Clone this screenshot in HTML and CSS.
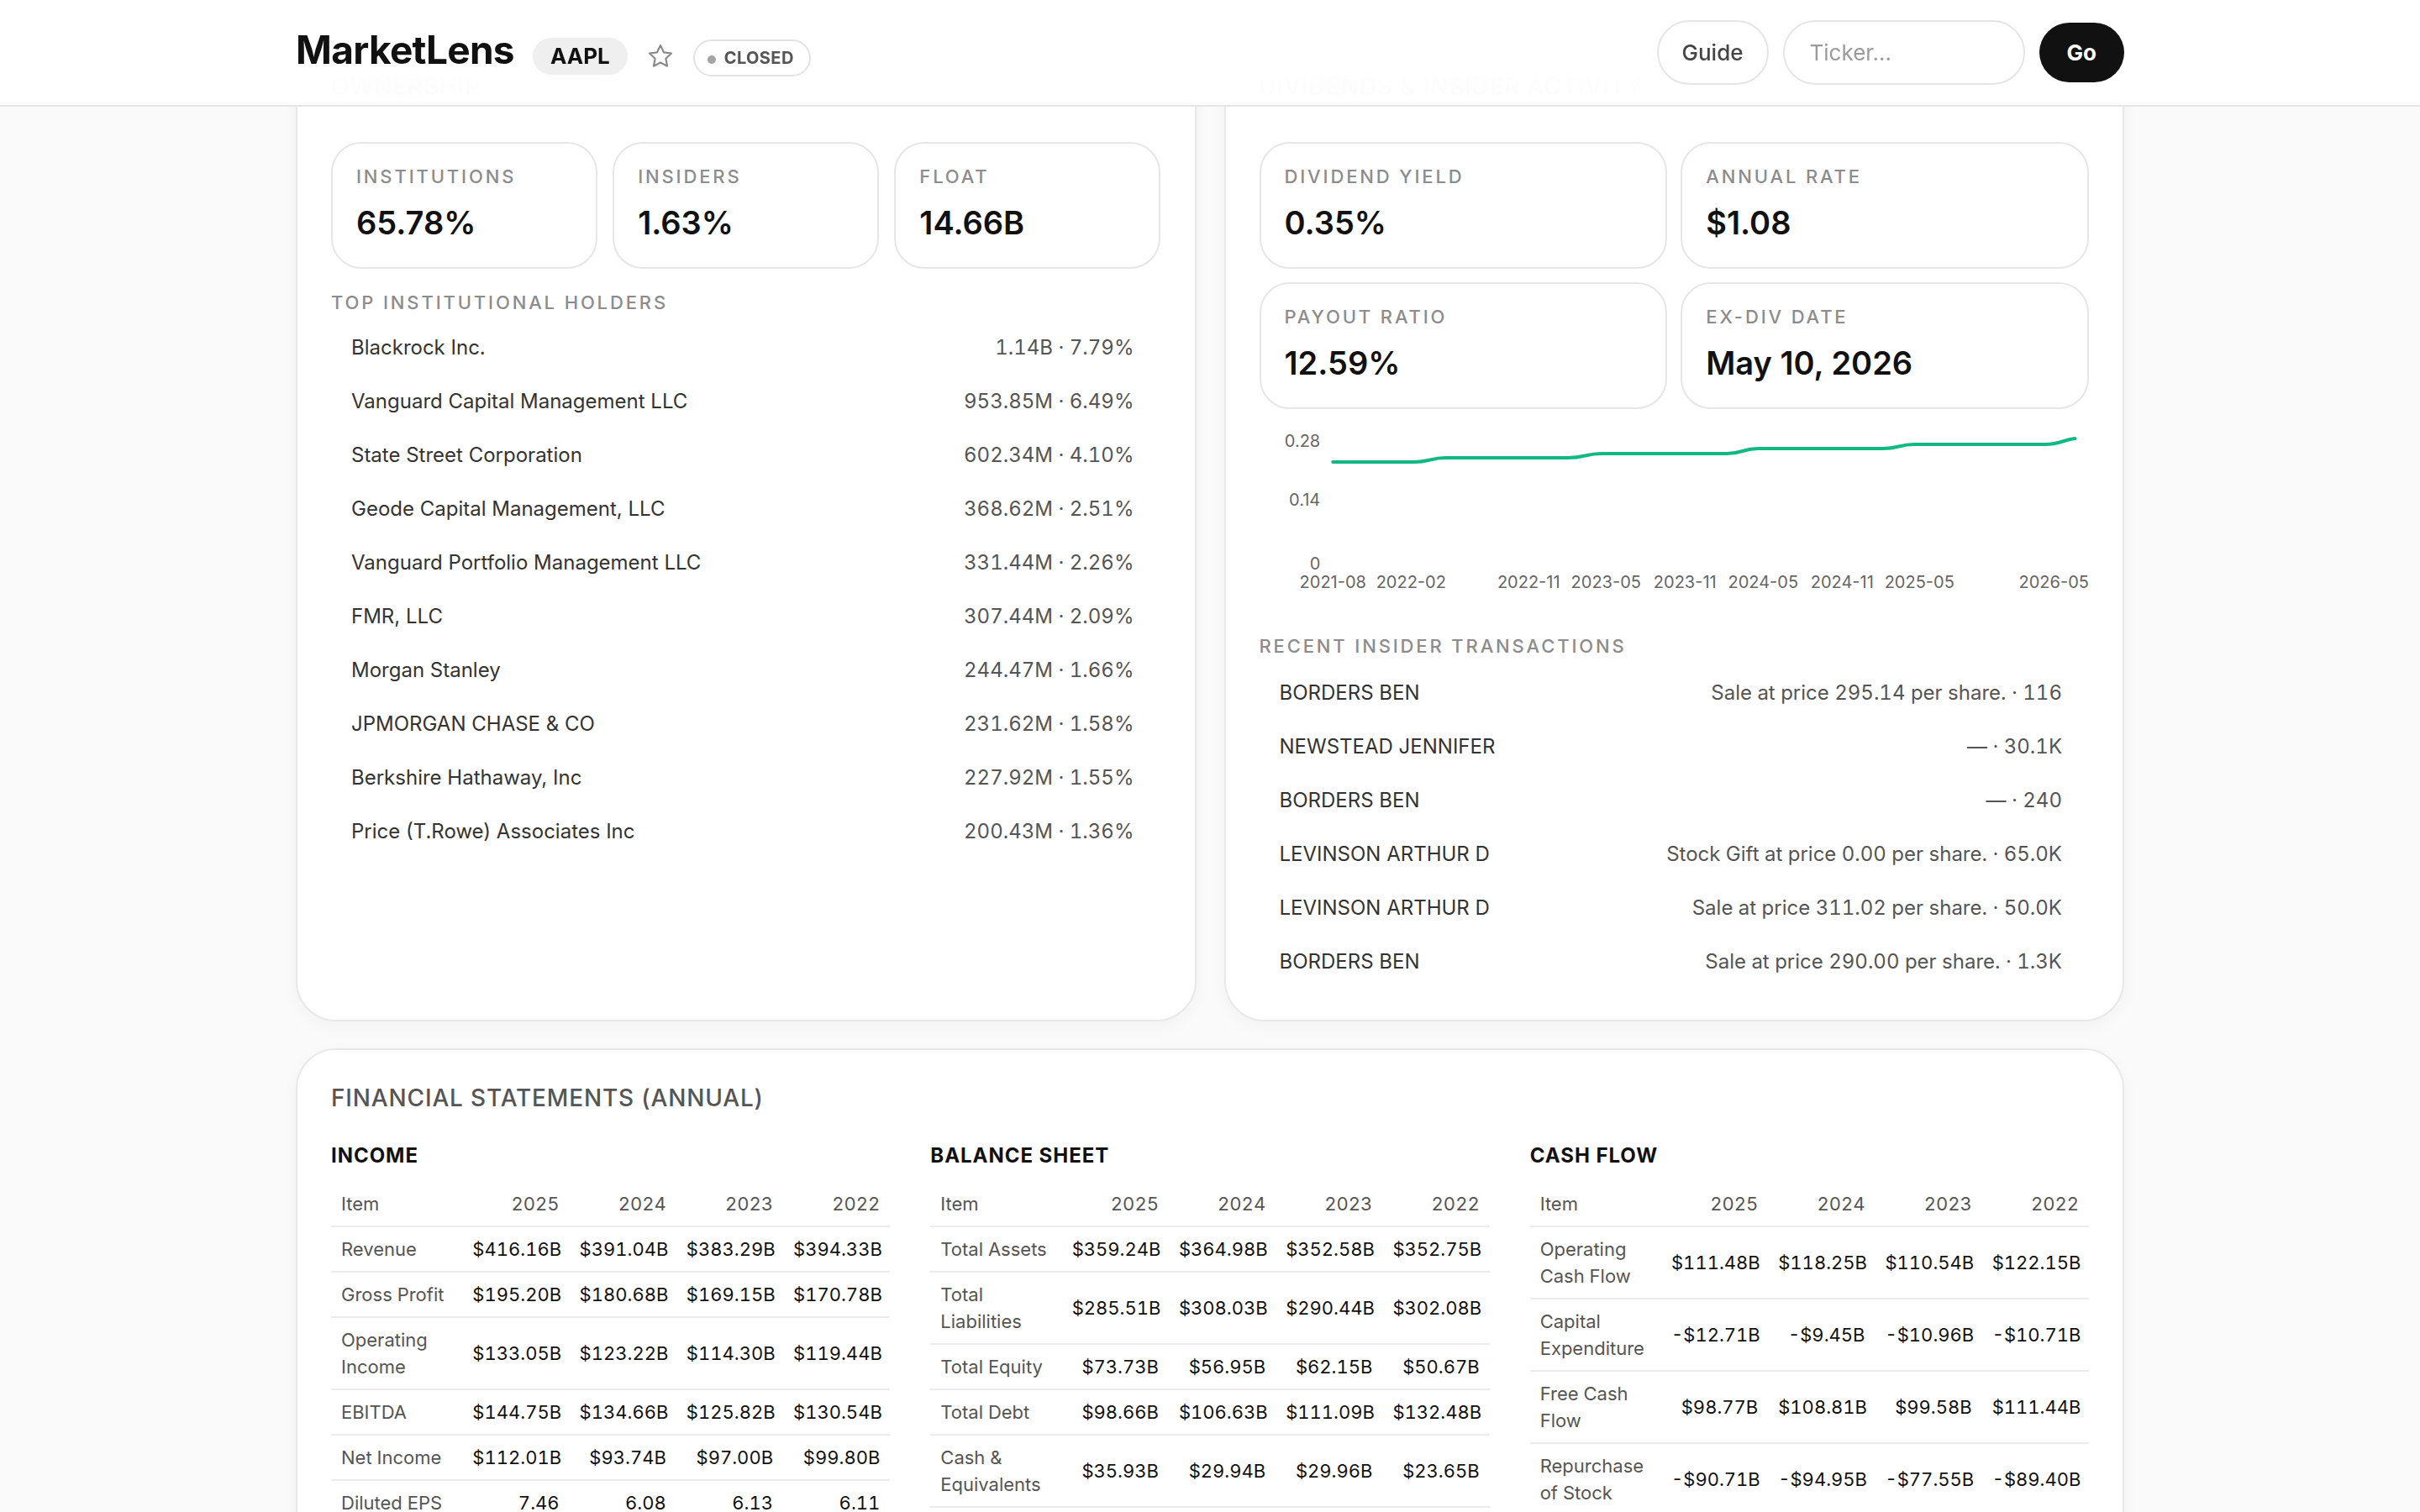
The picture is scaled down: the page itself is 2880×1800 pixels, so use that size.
FILE: index.html
```html
<!DOCTYPE html>
<html>
<head>
    <meta charset="utf-8">
    <title>MarketLens · AAPL</title>
    <link rel="stylesheet" href="styles.css">
</head>
<body>
    <header class="topbar">
        <div class="topbar-inner">
            <div class="brand-group">
                <span class="brand">MarketLens</span>
                <span class="ticker-pill">AAPL</span>
                <button class="star-btn" title="Add to watchlist">
                    <svg viewBox="0 0 24 24" width="34" height="34"><path d="M12 2.8l2.8 5.9 6.4.8-4.7 4.4 1.2 6.4L12 17.2l-5.7 3.1 1.2-6.4-4.7-4.4 6.4-.8z"/></svg>
                </button>
                <span class="status-pill">CLOSED</span>
            </div>
            <form class="search-group">
                <button type="button" class="btn-outline">Guide</button>
                <input class="ticker-input" type="text" placeholder="Ticker...">
                <button type="submit" class="btn-go">Go</button>
            </form>
        </div>
    </header>

    <main class="page">
        <section class="top-grid">
            <!-- ownership -->
            <div class="panel">
                <h2 class="panel-title spaced">Ownership</h2>
                <div class="stat-row">
                    <div class="stat">
                        <div class="stat-label">Institutions</div>
                        <div class="stat-value">65.78%</div>
                    </div>
                    <div class="stat">
                        <div class="stat-label">Insiders</div>
                        <div class="stat-value">1.63%</div>
                    </div>
                    <div class="stat">
                        <div class="stat-label">Float</div>
                        <div class="stat-value">14.66B</div>
                    </div>
                </div>
                <h3 class="list-heading">Top institutional holders</h3>
                <ul class="kv-list">
                    <li><span class="kv-name">Blackrock Inc.</span><span class="kv-val">1.14B · 7.79%</span></li>
                    <li><span class="kv-name">Vanguard Capital Management LLC</span><span class="kv-val">953.85M · 6.49%</span></li>
                    <li><span class="kv-name">State Street Corporation</span><span class="kv-val">602.34M · 4.10%</span></li>
                    <li><span class="kv-name">Geode Capital Management, LLC</span><span class="kv-val">368.62M · 2.51%</span></li>
                    <li><span class="kv-name">Vanguard Portfolio Management LLC</span><span class="kv-val">331.44M · 2.26%</span></li>
                    <li><span class="kv-name">FMR, LLC</span><span class="kv-val">307.44M · 2.09%</span></li>
                    <li><span class="kv-name">Morgan Stanley</span><span class="kv-val">244.47M · 1.66%</span></li>
                    <li><span class="kv-name">JPMORGAN CHASE &amp; CO</span><span class="kv-val">231.62M · 1.58%</span></li>
                    <li><span class="kv-name">Berkshire Hathaway, Inc</span><span class="kv-val">227.92M · 1.55%</span></li>
                    <li><span class="kv-name">Price (T.Rowe) Associates Inc</span><span class="kv-val">200.43M · 1.36%</span></li>
                </ul>
            </div>

            <!-- dividends + insiders -->
            <div class="panel">
                <h2 class="panel-title spaced">Dividends &amp; insider activity</h2>
                <div class="stat-grid">
                    <div class="stat">
                        <div class="stat-label">Dividend yield</div>
                        <div class="stat-value">0.35%</div>
                    </div>
                    <div class="stat">
                        <div class="stat-label">Annual rate</div>
                        <div class="stat-value">$1.08</div>
                    </div>
                    <div class="stat">
                        <div class="stat-label">Payout ratio</div>
                        <div class="stat-value">12.59%</div>
                    </div>
                    <div class="stat">
                        <div class="stat-label">Ex-div date</div>
                        <div class="stat-value">May 10, 2026</div>
                    </div>
                </div>

                <svg class="div-chart" viewBox="0 0 987 229">
                    <g class="axis-y">
                        <text x="72" y="31">0.28</text>
                        <text x="72" y="101">0.14</text>
                        <text x="72" y="177">0</text>
                    </g>
                    <g class="axis-x">
                        <text x="87" y="199">2021-08</text>
                        <text x="180" y="199">2022-02</text>
                        <text x="320" y="199">2022-11</text>
                        <text x="412" y="199">2023-05</text>
                        <text x="506" y="199">2023-11</text>
                        <text x="599" y="199">2024-05</text>
                        <text x="693" y="199">2024-11</text>
                        <text x="785" y="199">2025-05</text>
                        <text x="945" y="199">2026-05</text>
                    </g>
                    <path class="div-line" d="M87,49 L184,49 C202,49 203,44 221,44 L367,44 C387,44 387,39 407,39 L556,39 C574,39 575,33 593,33 L742,33 C760,33 761,28 779,28 L935,28 C952,28 955,23 970,21"/>
                </svg>

                <h3 class="list-heading after-chart">Recent insider transactions</h3>
                <ul class="kv-list">
                    <li><span class="kv-name">BORDERS BEN</span><span class="kv-val">Sale at price 295.14 per share. · 116</span></li>
                    <li><span class="kv-name">NEWSTEAD JENNIFER</span><span class="kv-val">— · 30.1K</span></li>
                    <li><span class="kv-name">BORDERS BEN</span><span class="kv-val">— · 240</span></li>
                    <li><span class="kv-name">LEVINSON ARTHUR D</span><span class="kv-val">Stock Gift at price 0.00 per share. · 65.0K</span></li>
                    <li><span class="kv-name">LEVINSON ARTHUR D</span><span class="kv-val">Sale at price 311.02 per share. · 50.0K</span></li>
                    <li><span class="kv-name">BORDERS BEN</span><span class="kv-val">Sale at price 290.00 per share. · 1.3K</span></li>
                </ul>
            </div>
        </section>

        <section class="panel fin-panel">
            <h2 class="panel-title">Financial Statements (Annual)</h2>
            <div class="fin-grid">
                <div class="fin-block">
                    <h3>Income</h3>
                    <table class="fin-table">
                        <colgroup><col class="col-item"><col><col><col><col></colgroup>
                        <thead>
                            <tr><th>Item</th><th>2025</th><th>2024</th><th>2023</th><th>2022</th></tr>
                        </thead>
                        <tbody>
                            <tr><td>Revenue</td><td>$416.16B</td><td>$391.04B</td><td>$383.29B</td><td>$394.33B</td></tr>
                            <tr><td>Gross Profit</td><td>$195.20B</td><td>$180.68B</td><td>$169.15B</td><td>$170.78B</td></tr>
                            <tr><td>Operating Income</td><td>$133.05B</td><td>$123.22B</td><td>$114.30B</td><td>$119.44B</td></tr>
                            <tr><td>EBITDA</td><td>$144.75B</td><td>$134.66B</td><td>$125.82B</td><td>$130.54B</td></tr>
                            <tr><td>Net Income</td><td>$112.01B</td><td>$93.74B</td><td>$97.00B</td><td>$99.80B</td></tr>
                            <tr><td>Diluted EPS</td><td>7.46</td><td>6.08</td><td>6.13</td><td>6.11</td></tr>
                        </tbody>
                    </table>
                </div>
                <div class="fin-block">
                    <h3>Balance Sheet</h3>
                    <table class="fin-table">
                        <colgroup><col class="col-item"><col><col><col><col></colgroup>
                        <thead>
                            <tr><th>Item</th><th>2025</th><th>2024</th><th>2023</th><th>2022</th></tr>
                        </thead>
                        <tbody>
                            <tr><td>Total Assets</td><td>$359.24B</td><td>$364.98B</td><td>$352.58B</td><td>$352.75B</td></tr>
                            <tr><td>Total Liabilities</td><td>$285.51B</td><td>$308.03B</td><td>$290.44B</td><td>$302.08B</td></tr>
                            <tr><td>Total Equity</td><td>$73.73B</td><td>$56.95B</td><td>$62.15B</td><td>$50.67B</td></tr>
                            <tr><td>Total Debt</td><td>$98.66B</td><td>$106.63B</td><td>$111.09B</td><td>$132.48B</td></tr>
                            <tr><td>Cash &amp; Equivalents</td><td>$35.93B</td><td>$29.94B</td><td>$29.96B</td><td>$23.65B</td></tr>
                        </tbody>
                    </table>
                </div>
                <div class="fin-block">
                    <h3>Cash Flow</h3>
                    <table class="fin-table">
                        <colgroup><col class="col-item"><col><col><col><col></colgroup>
                        <thead>
                            <tr><th>Item</th><th>2025</th><th>2024</th><th>2023</th><th>2022</th></tr>
                        </thead>
                        <tbody>
                            <tr><td>Operating Cash Flow</td><td>$111.48B</td><td>$118.25B</td><td>$110.54B</td><td>$122.15B</td></tr>
                            <tr><td>Capital Expenditure</td><td>-$12.71B</td><td>-$9.45B</td><td>-$10.96B</td><td>-$10.71B</td></tr>
                            <tr><td>Free Cash Flow</td><td>$98.77B</td><td>$108.81B</td><td>$99.58B</td><td>$111.44B</td></tr>
                            <tr><td>Repurchase of Stock</td><td>-$90.71B</td><td>-$94.95B</td><td>-$77.55B</td><td>-$89.40B</td></tr>
                        </tbody>
                    </table>
                </div>
            </div>
        </section>
    </main>
</body>
</html>
```

FILE: styles.css
```css
* {
    box-sizing: border-box;
}
body {
    margin: 0;
    background-color: #fafafa;
    font-family: Inter, "Liberation Sans", sans-serif;
    color: #111;
}

/* top bar, frosted over the page */
.topbar {
    position: fixed;
    top: 0;
    left: 0;
    right: 0;
    z-index: 10;
    background-color: rgba(255, 255, 255, 0.95);
    backdrop-filter: blur(30px);
    border-bottom: 2px solid #e6e6e6;
}
.topbar-inner {
    max-width: 2176px;
    margin: 0 auto;
    padding: 24px 0;
    display: flex;
    align-items: center;
    justify-content: space-between;
}
.brand-group {
    display: flex;
    align-items: baseline;
    gap: 22px;
}
.brand {
    font-size: 46px;
    font-weight: 700;
    line-height: 50px;
    letter-spacing: -0.015em;
}
.ticker-pill {
    background-color: #efefef;
    border-radius: 999px;
    padding: 5px 21px;
    font-size: 26px;
    font-weight: 700;
    line-height: 34px;
}
.star-btn {
    align-self: center;
    margin-top: 8px;
    padding: 0;
    border: none;
    background: none;
    display: flex;
}
.star-btn svg {
    fill: none;
    stroke: #8a8a8a;
    stroke-width: 1.5;
    stroke-linejoin: round;
}
.status-pill {
    display: inline-block;
    border: 2px solid #e3e3e3;
    border-radius: 999px;
    padding: 4px 18px 4px 15px;
    font-size: 20px;
    font-weight: 700;
    line-height: 32px;
    letter-spacing: 0.02em;
    color: #555;
}
.status-pill::before {
    content: "";
    display: inline-block;
    width: 10px;
    height: 10px;
    margin-right: 10px;
    border-radius: 50%;
    background-color: #a3a3a3;
    vertical-align: middle;
}
.search-group {
    display: flex;
    align-items: center;
    gap: 17px;
    margin: 0;
}
.btn-outline {
    padding: 20px 28px;
    border: 2px solid #e5e5e5;
    border-radius: 999px;
    background-color: #fff;
    font: 500 26px/33px Inter, sans-serif;
    color: #444;
}
.ticker-input {
    width: 288px;
    padding: 20px 30px;
    border: 2px solid #e5e5e5;
    border-radius: 999px;
    background-color: #fff;
    font: 400 26px/33px Inter, sans-serif;
    color: #111;
}
.ticker-input::placeholder {
    color: #9b9b9b;
}
.btn-go {
    padding: 19px 33px;
    border: none;
    border-radius: 999px;
    background-color: #111;
    color: white;
    font: 700 26px/33px Inter, sans-serif;
}

/* page body */
.page {
    max-width: 2176px;
    margin: 0 auto;
    padding: 40px 0 60px;
}
.top-grid {
    display: grid;
    grid-template-columns: 1fr 1fr;
    gap: 33px;
}
.panel {
    background-color: #fff;
    border: 2px solid #e8e8e8;
    border-radius: 48px;
    padding: 40px 40px 38px;
    box-shadow: 0 6px 20px rgba(0, 0, 0, 0.035);
}
.top-grid .panel {
    padding-top: 44px;
}
.fin-panel {
    margin-top: 32px;
}
.panel-title {
    margin: 0 0 37px;
    font-size: 28px;
    font-weight: 500;
    line-height: 34px;
    letter-spacing: 0.03em;
    color: #555;
    text-transform: uppercase;
}
.panel-title.spaced {
    margin-bottom: 49px;
}

/* stat cards */
.stat-row {
    display: grid;
    grid-template-columns: repeat(3, 1fr);
    gap: 18px;
}
.stat-grid {
    display: grid;
    grid-template-columns: repeat(2, 1fr);
    gap: 16px;
}
.stat {
    border: 2px solid #e6e6e6;
    border-radius: 36px;
    padding: 24px 28px 29px;
}
.stat-label {
    font-size: 22px;
    font-weight: 500;
    line-height: 30px;
    letter-spacing: 0.13em;
    color: #8c8c8c;
    text-transform: uppercase;
}
.stat-value {
    margin-top: 16px;
    font-size: 38px;
    font-weight: 600;
    line-height: 48px;
    color: #111;
}

/* lists */
.list-heading {
    margin: 25px 0 6px;
    font-size: 22px;
    font-weight: 500;
    line-height: 30px;
    letter-spacing: 0.13em;
    color: #8c8c8c;
    text-transform: uppercase;
}
.list-heading.after-chart {
    margin: 24px 0 8px;
}
.kv-list {
    list-style: none;
    margin: 0;
    padding: 0;
}
.kv-list li {
    display: flex;
    justify-content: space-between;
    align-items: center;
    height: 64px;
    padding: 0 32px 0 24px;
    font-size: 24px;
}
.kv-name {
    color: #333;
}
.kv-val {
    color: #555;
    font-variant-numeric: tabular-nums;
}

/* dividend chart */
.div-chart {
    display: block;
    width: 100%;
    height: 229px;
    margin-top: 14px;
}
.div-chart text {
    font-family: Inter, sans-serif;
    font-size: 20px;
    fill: #666;
}
.axis-y text {
    text-anchor: end;
}
.axis-x text {
    text-anchor: middle;
}
.div-line {
    fill: none;
    stroke: #10b981;
    stroke-width: 4;
    stroke-linecap: round;
}

/* statements */
.fin-grid {
    display: grid;
    grid-template-columns: repeat(3, 1fr);
    gap: 48px;
}
.fin-block h3 {
    margin: 0 0 16px;
    font-size: 24px;
    font-weight: 700;
    line-height: 30px;
    letter-spacing: 0.04em;
    text-transform: uppercase;
}
.fin-table {
    width: 100%;
    border-collapse: collapse;
    table-layout: fixed;
    font-size: 22px;
    line-height: 32px;
    font-variant-numeric: tabular-nums;
}
.col-item {
    width: 23.5%;
}
.fin-table th,
.fin-table td {
    padding: 10px 12px;
    text-align: right;
    border-bottom: 2px solid #ebebeb;
    white-space: nowrap;
}
.fin-table th {
    font-weight: 400;
    color: #555;
}
.fin-table td {
    color: #111;
}
.fin-table th:first-child,
.fin-table td:first-child {
    text-align: left;
    color: #555;
    white-space: normal;
}
```
